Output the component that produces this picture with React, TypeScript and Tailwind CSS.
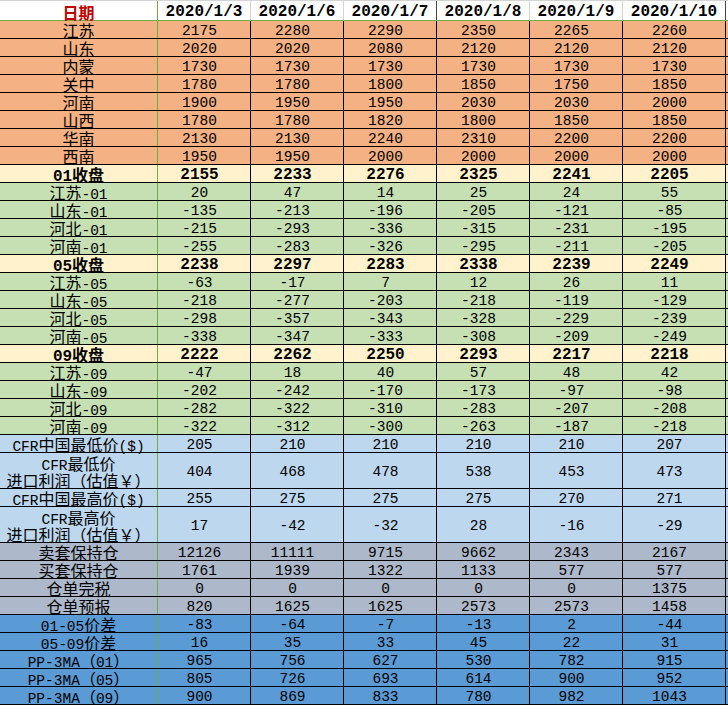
type Kind = "orange" | "close" | "green" | "cfr" | "grey" | "blue";

type Row = {
  label: string;
  values: number[];
  kind: Kind;
  tall?: boolean;
};

const dates = ["2020/1/3", "2020/1/6", "2020/1/7", "2020/1/8", "2020/1/9", "2020/1/10"];

const rows: Row[] = [
  { label: "江苏", values: [2175, 2280, 2290, 2350, 2265, 2260], kind: "orange" },
  { label: "山东", values: [2020, 2020, 2080, 2120, 2120, 2120], kind: "orange" },
  { label: "内蒙", values: [1730, 1730, 1730, 1730, 1730, 1730], kind: "orange" },
  { label: "关中", values: [1780, 1780, 1800, 1850, 1750, 1850], kind: "orange" },
  { label: "河南", values: [1900, 1950, 1950, 2030, 2030, 2000], kind: "orange" },
  { label: "山西", values: [1780, 1780, 1820, 1800, 1850, 1850], kind: "orange" },
  { label: "华南", values: [2130, 2130, 2240, 2310, 2200, 2200], kind: "orange" },
  { label: "西南", values: [1950, 1950, 2000, 2000, 2000, 2000], kind: "orange" },
  { label: "01收盘", values: [2155, 2233, 2276, 2325, 2241, 2205], kind: "close" },
  { label: "江苏-01", values: [20, 47, 14, 25, 24, 55], kind: "green" },
  { label: "山东-01", values: [-135, -213, -196, -205, -121, -85], kind: "green" },
  { label: "河北-01", values: [-215, -293, -336, -315, -231, -195], kind: "green" },
  { label: "河南-01", values: [-255, -283, -326, -295, -211, -205], kind: "green" },
  { label: "05收盘", values: [2238, 2297, 2283, 2338, 2239, 2249], kind: "close" },
  { label: "江苏-05", values: [-63, -17, 7, 12, 26, 11], kind: "green" },
  { label: "山东-05", values: [-218, -277, -203, -218, -119, -129], kind: "green" },
  { label: "河北-05", values: [-298, -357, -343, -328, -229, -239], kind: "green" },
  { label: "河南-05", values: [-338, -347, -333, -308, -209, -249], kind: "green" },
  { label: "09收盘", values: [2222, 2262, 2250, 2293, 2217, 2218], kind: "close" },
  { label: "江苏-09", values: [-47, 18, 40, 57, 48, 42], kind: "green" },
  { label: "山东-09", values: [-202, -242, -170, -173, -97, -98], kind: "green" },
  { label: "河北-09", values: [-282, -322, -310, -283, -207, -208], kind: "green" },
  { label: "河南-09", values: [-322, -312, -300, -263, -187, -218], kind: "green" },
  { label: "CFR中国最低价($)", values: [205, 210, 210, 210, 210, 207], kind: "cfr" },
  { label: "CFR最低价\n进口利润（估值￥）", values: [404, 468, 478, 538, 453, 473], kind: "cfr", tall: true },
  { label: "CFR中国最高价($)", values: [255, 275, 275, 275, 270, 271], kind: "cfr" },
  { label: "CFR最高价\n进口利润（估值￥）", values: [17, -42, -32, 28, -16, -29], kind: "cfr", tall: true },
  { label: "卖套保持仓", values: [12126, 11111, 9715, 9662, 2343, 2167], kind: "grey" },
  { label: "买套保持仓", values: [1761, 1939, 1322, 1133, 577, 577], kind: "grey" },
  { label: "仓单完税", values: [0, 0, 0, 0, 0, 1375], kind: "grey" },
  { label: "仓单预报", values: [820, 1625, 1625, 2573, 2573, 1458], kind: "grey" },
  { label: "01-05价差", values: [-83, -64, -7, -13, 2, -44], kind: "blue" },
  { label: "05-09价差", values: [16, 35, 33, 45, 22, 31], kind: "blue" },
  { label: "PP-3MA（01）", values: [965, 756, 627, 530, 782, 915], kind: "blue" },
  { label: "PP-3MA（05）", values: [805, 726, 693, 614, 900, 952], kind: "blue" },
  { label: "PP-3MA（09）", values: [900, 869, 833, 780, 982, 1043], kind: "blue" },
];

const bgByKind: Record<Kind, string> = {
  orange: "bg-[#F4B183]",
  close: "bg-[#FFF2CC]",
  green: "bg-[#C6E0B4]",
  cfr: "bg-[#BDD7EE]",
  grey: "bg-[#ADB9CA]",
  blue: "bg-[#5B9BD5]",
};

const MONO = "font-['Liberation_Mono','Noto_Sans_CJK_SC',monospace]";
const CJK = "font-['Noto_Sans_CJK_SC','Noto_Sans',sans-serif]";

const isCjk = (s: string) => /[\u3000-\u9fff\uff00-\uffef]/.test(s);

// split a label into CJK / latin runs so each gets its own size (SimSun-like half width)
function Mixed({ text, bold }: { text: string; bold?: boolean }) {
  const parts = text.match(/[\u3000-\u9fff\uff00-\uffef]+|[^\u3000-\u9fff\uff00-\uffef]+/g) ?? [];
  return (
    <div className={`${MONO} h-[15px] whitespace-nowrap text-[14.5px] leading-[15px]`}>
      {parts.map((p, i) =>
        isCjk(p) ? (
          <span key={i} className={`${CJK} text-[16px] leading-[15px] ${bold ? "font-bold" : "font-normal"}`}>
            {p}
          </span>
        ) : (
          <span key={i} className={`${MONO} leading-[15px] ${bold ? "text-[16px] font-bold" : "text-[14.5px]"}`}>
            {p}
          </span>
        ),
      )}
    </div>
  );
}

function HeaderRow() {
  return (
    <div className="flex h-[21px] w-[728px] border-t border-b border-t-[#d4d4d4] border-b-[#70AD47] bg-white">
      <div className="flex w-[158px] items-center justify-center border-r border-[#70AD47] pt-[2px]">
        <span className={`${CJK} text-[16px] font-bold leading-none text-[#C00000]`}>日期</span>
      </div>
      {dates.map((d, i) => (
        <div
          key={d}
          className={`flex items-center justify-center border-r pt-[3px] ${i === 5 ? "w-[103px]" : "w-[93px]"} ${
            i === 2 || i === 5 ? "border-[#444]" : "border-[#d4d4d4]"
          }`}
        >
          <span className={`${MONO} text-[16px] font-bold leading-none text-black`}>{d}</span>
        </div>
      ))}
    </div>
  );
}

function DataRow({ row }: { row: Row }) {
  const bold = row.kind === "close";
  const lines = row.label.split("\n");
  return (
    <div
      className={`flex w-[728px] border-b border-black text-black ${bgByKind[row.kind]} ${
        row.tall ? "h-[36px]" : "h-[18px]"
      }`}
    >
      <div
        className={`flex w-[158px] flex-col items-center justify-center border-r border-[#70AD47] pt-[2px] ${
          row.tall ? "gap-[2px]" : ""
        }`}
      >
        {lines.map((l) => (
          <Mixed key={l} text={l} bold={bold} />
        ))}
      </div>
      {row.values.map((v, i) => (
        <div
          key={i}
          className={`flex items-center justify-center border-r border-black pt-[3px] pr-[9px] ${
            i === 5 ? "w-[103px]" : "w-[93px]"
          }`}
        >
          <span className={`${MONO} leading-none ${bold ? "text-[16px] font-bold" : "text-[14.5px]"}`}>{v}</span>
        </div>
      ))}
    </div>
  );
}

export default function App() {
  return (
    <div className="h-[706px] w-[728px] overflow-hidden bg-white">
      <HeaderRow />
      {rows.map((r) => (
        <DataRow key={r.label} row={r} />
      ))}
    </div>
  );
}
